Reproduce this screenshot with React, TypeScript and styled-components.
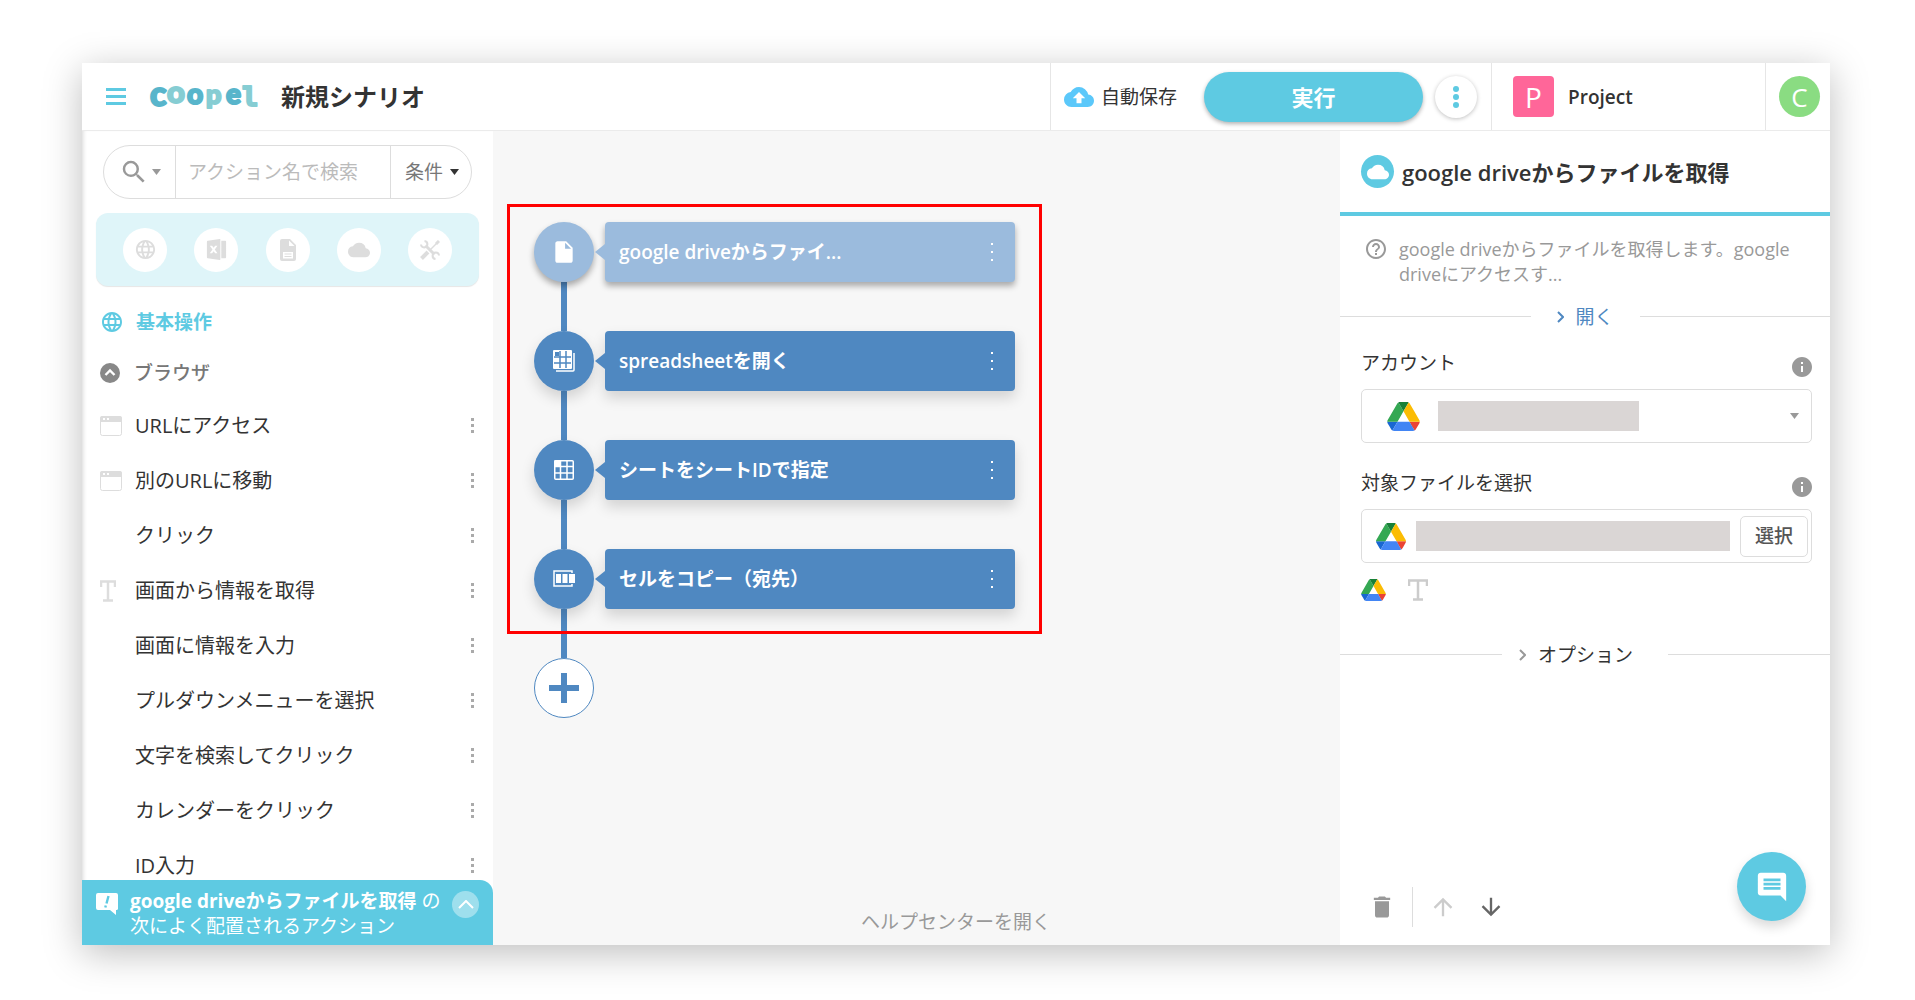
import React from "react";
import styled, { createGlobalStyle } from "styled-components";
import {
  MdArrowDownward,
  MdArrowUpward,
  MdCloud,
  MdCloudUpload,
  MdComment,
  MdDelete,
  MdHelpOutline,
  MdInfo,
  MdInsertDriveFile,
  MdLanguage,
  MdSearch,
} from "react-icons/md";
import { RiFileExcel2Fill } from "react-icons/ri";

const teal = "#5ecae2";
const blue = "#4f88c1";
const paleBlue = "#9bbbdd";
const ink = "#333333";
const grey = "#999999";
const line = "#dddddd";

const GlobalStyle = createGlobalStyle`
  * { box-sizing: border-box; }
  body {
    margin: 0;
    background: #ffffff;
    color: ${ink};
    font-family: "Open Sans", "Noto Sans CJK JP", sans-serif;
    font-size: 19px;
    line-height: 24px;
  }
  button, input, select { font: inherit; color: inherit; margin: 0; }
  button { border: 0; padding: 0; background: none; cursor: pointer; }
  h1, h2, p, ul, ol { margin: 0; padding: 0; }
  ul, ol { list-style: none; }
  svg { display: block; flex: none; }
`;

const Page = styled.div`
  display: flex;
  height: 100vh;
  padding: 63px 85px 55px 82px;
`;

const Window = styled.div`
  position: relative;
  flex: 1;
  min-width: 0;
  display: flex;
  flex-direction: column;
  background: #ffffff;
  box-shadow: 0 8px 36px rgba(0, 0, 0, 0.26);
`;

/* ---------- header ---------- */

const Header = styled.header`
  display: flex;
  align-items: center;
  height: 68px;
  flex: none;
  border-bottom: 1px solid #ebebeb;
`;

const MenuButton = styled.button`
  display: flex;
  flex-direction: column;
  gap: 4px;
  width: 20px;
  margin: 0 24px;
`;

const MenuBar = styled.span`
  height: 3px;
  background: ${teal};
`;

const Title = styled.h1`
  margin-left: 22px;
  font-size: 24px;
  line-height: 32px;
  font-weight: 700;
`;

const HeaderGroup = styled.div<{ $push?: boolean }>`
  display: flex;
  align-items: center;
  align-self: stretch;
  margin-left: ${(p) => (p.$push ? "auto" : "0")};
  border-left: 1px solid #e6e6e6;
`;

const AutoSave = styled.span`
  display: flex;
  align-items: center;
  gap: 7px;
  padding: 0 27px 0 13px;
  svg { color: #5bc8fa; }
`;

const RunButton = styled.button`
  width: 219px;
  height: 50px;
  border-radius: 25px;
  background: ${teal};
  color: #ffffff;
  font-size: 22px;
  font-weight: 700;
  box-shadow: 0 2px 4px rgba(0, 0, 0, 0.3);
`;

const MoreButton = styled.button`
  display: grid;
  place-items: center;
  width: 42px;
  height: 42px;
  margin: 0 14px 0 12px;
  border-radius: 50%;
  box-shadow: 0 1px 4px rgba(0, 0, 0, 0.25);
`;

const ProjectButton = styled.button`
  display: flex;
  align-items: center;
  gap: 14px;
  width: 273px;
  padding-left: 21px;
  font-weight: 600;
`;

const ProjectBadge = styled.span`
  display: grid;
  place-items: center;
  width: 41px;
  height: 41px;
  border-radius: 4px;
  background: #ff6699;
  color: #ffffff;
  font-size: 28px;
  font-weight: 400;
`;

const Avatar = styled.button`
  width: 41px;
  height: 41px;
  margin: 0 10px 0 13px;
  border-radius: 50%;
  background: #8adc82;
  color: #ffffff;
  font-size: 26px;
`;

/* ---------- body ---------- */

const Body = styled.div`
  flex: 1;
  min-height: 0;
  display: flex;
`;

const Sidebar = styled.aside`
  display: flex;
  flex-direction: column;
  width: 411px;
  flex: none;
  box-shadow: inset 4px 0 4px -3px rgba(0, 0, 0, 0.16);
`;

const SearchForm = styled.form`
  display: flex;
  flex: none;
  height: 54px;
  margin: 14px 21px;
  border: 1px solid ${line};
  border-radius: 27px;
  overflow: hidden;
`;

const ScopeButton = styled.button`
  display: flex;
  align-items: center;
  gap: 3px;
  width: 71px;
  padding-left: 15px;
  color: ${grey};
`;

const SearchInput = styled.input`
  flex: 1;
  min-width: 0;
  padding: 0 12px;
  border: 0;
  border-left: 1px solid ${line};
  border-right: 1px solid ${line};
  background: none;
  outline: none;
  &::placeholder { color: #bbbbbb; opacity: 1; }
`;

const ConditionBox = styled.div`
  position: relative;
  display: flex;
  width: 80px;
  svg {
    position: absolute;
    right: 12px;
    top: 23px;
    pointer-events: none;
  }
`;

const ConditionSelect = styled.select`
  flex: 1;
  appearance: none;
  border: 0;
  padding: 0 14px;
  background: none;
  color: #777777;
`;

const Categories = styled.nav`
  display: flex;
  justify-content: space-between;
  align-items: center;
  flex: none;
  height: 73px;
  margin: 0 14px 10px;
  padding: 0 27px;
  border-radius: 12px;
  background: #dff5f9;
  box-shadow: 0 1px 1px rgba(0, 0, 0, 0.1);
`;

const CategoryButton = styled.button`
  display: grid;
  place-items: center;
  width: 44px;
  height: 44px;
  border-radius: 50%;
  background: #ffffff;
  color: #dddddd;
`;

const ActionScroll = styled.div`
  flex: 1;
  min-height: 0;
  overflow: hidden;
`;

const GroupRow = styled.h2<{ $color: string }>`
  display: flex;
  align-items: center;
  height: 51px;
  padding-left: 18px;
  gap: 12px;
  font-size: 19px;
  font-weight: 700;
  color: ${(p) => p.$color};
`;

const GroupToggle = styled.button`
  display: flex;
  align-items: center;
  gap: 14px;
  font-weight: 500;
`;

const ActionRow = styled.li`
  display: flex;
  align-items: center;
  height: 55px;
  padding: 0 15px 0 18px;
  font-size: 20px;
`;

const ActionIcon = styled.span`
  width: 35px;
  color: #dddddd;
`;

const DotsButton = styled.button`
  margin-left: auto;
  padding: 4px;
  color: #aaaaaa;
`;

const Suggestion = styled.section`
  display: flex;
  align-items: flex-start;
  flex: none;
  height: 65px;
  padding: 9px 14px 0;
  gap: 12px;
  border-top-right-radius: 13px;
  background: ${teal};
  color: #ffffff;
  > svg { margin-top: 4px; }
`;

const SuggestionText = styled.p`
  flex: 1;
  white-space: nowrap;
  line-height: 25px;
`;

const CollapseButton = styled.button`
  display: grid;
  place-items: center;
  width: 27px;
  height: 27px;
  margin-top: 2px;
  border-radius: 50%;
  background: rgba(255, 255, 255, 0.4);
`;

/* ---------- flow canvas ---------- */

const Canvas = styled.main`
  flex: 1;
  min-width: 0;
  display: flex;
  flex-direction: column;
  padding: 91px 0 11px 41px;
  background: #f7f7f7;
`;

const Steps = styled.ol`
  position: relative;
  max-width: 481px;
`;

const Highlight = styled.li`
  position: absolute;
  inset: -18px -27px -25px;
  border: 3px solid #ff0000;
  pointer-events: none;
`;

const Step = styled.li`
  display: flex;
  align-items: center;
  gap: 11px;
`;

const Connector = styled.li`
  width: 6px;
  height: 49px;
  margin-left: 27px;
  background: ${blue};
`;

const Tail = styled.div`
  width: 6px;
  height: 49px;
  margin-left: 27px;
  background: ${blue};
`;

const stepShadow = (active?: boolean) =>
  active ? "0 4px 6px rgba(0, 0, 0, 0.32)" : "0 7px 14px rgba(0, 0, 0, 0.15)";

const StepCircle = styled.span<{ $active?: boolean }>`
  display: grid;
  place-items: center;
  flex: none;
  width: 60px;
  height: 60px;
  border-radius: 50%;
  background: ${(p) => (p.$active ? paleBlue : blue)};
  color: #ffffff;
  box-shadow: ${(p) => stepShadow(p.$active)};
`;

const StepCard = styled.div<{ $active?: boolean }>`
  position: relative;
  flex: 1;
  display: flex;
  align-items: center;
  justify-content: space-between;
  height: 60px;
  padding: 0 18px 0 14px;
  border-radius: 4px;
  background: ${(p) => (p.$active ? paleBlue : blue)};
  color: #ffffff;
  font-weight: 600;
  box-shadow: ${(p) => stepShadow(p.$active)};
  &::before {
    content: "";
    position: absolute;
    right: 100%;
    top: 22px;
    border: 8px solid transparent;
    border-left-width: 0;
    border-right: 10px solid ${(p) => (p.$active ? paleBlue : blue)};
  }
  button { color: #ffffff; margin: 0; }
`;

const AddButton = styled.button`
  display: grid;
  place-items: center;
  flex: none;
  width: 60px;
  height: 60px;
  border: 1px solid ${blue};
  border-radius: 50%;
  background: #ffffff;
  color: ${blue};
`;

const HelpLink = styled.a`
  align-self: center;
  margin-top: auto;
  margin-left: 38px;
  color: ${grey};
  text-decoration: none;
`;

/* ---------- detail panel ---------- */

const Panel = styled.aside`
  display: flex;
  flex-direction: column;
  width: 490px;
  flex: none;
`;

const PanelHeader = styled.div`
  display: flex;
  align-items: center;
  gap: 8px;
  height: 85px;
  padding-left: 21px;
  border-bottom: 4px solid ${teal};
`;

const CloudBadge = styled.span`
  display: grid;
  place-items: center;
  width: 33px;
  height: 33px;
  border-radius: 50%;
  background: ${teal};
  color: #ffffff;
`;

const PanelTitle = styled.h2`
  font-size: 22px;
  font-weight: 600;
  line-height: 28px;
`;

const Description = styled.div`
  display: flex;
  gap: 11px;
  padding: 21px 24px 17px;
  color: ${grey};
  font-size: 18px;
  line-height: 25px;
`;

const Fold = styled.div<{ $top?: number }>`
  display: flex;
  align-items: center;
  height: 25px;
  margin-top: ${(p) => p.$top ?? 0}px;
  &::before, &::after {
    content: "";
    flex: 1;
    height: 1px;
    background: ${line};
  }
`;

const FoldButton = styled.button<{ $color: string; $pad: string }>`
  display: flex;
  align-items: center;
  gap: 12px;
  padding: ${(p) => p.$pad};
  color: ${(p) => p.$color};
`;

const Field = styled.div<{ $top: number }>`
  margin: ${(p) => p.$top}px 18px 0 21px;
`;

const FieldHead = styled.div`
  display: flex;
  justify-content: space-between;
  align-items: flex-start;
  height: 28px;
  margin: 0 -2px 10px 0;
  svg { align-self: flex-end; color: ${grey}; }
`;

const FieldBox = styled.div<{ $pad: string; $gap: number }>`
  position: relative;
  display: flex;
  align-items: center;
  gap: ${(p) => p.$gap}px;
  height: 54px;
  padding: ${(p) => p.$pad};
  border: 1px solid ${line};
  border-radius: 5px;
`;

const Redacted = styled.span`
  width: 201px;
  height: 30px;
  margin-right: auto;
  background: #dad6d5;
`;

const AccountSelect = styled.select`
  position: absolute;
  inset: 0;
  width: 100%;
  appearance: none;
  border: 0;
  background: transparent;
`;

const FileInput = styled.input`
  flex: 1;
  min-width: 0;
  height: 30px;
  padding: 0;
  border: 0;
  background: #dad6d5;
`;

const PickButton = styled.button`
  width: 68px;
  height: 41px;
  border: 1px solid ${line};
  border-radius: 5px;
  color: #555555;
  font-weight: 500;
`;

const SourceTypes = styled.div`
  display: flex;
  align-items: center;
  gap: 22px;
  height: 23px;
  margin: 15px 21px 0;
  color: #cccccc;
`;

const PanelFooter = styled.div`
  display: flex;
  align-items: center;
  gap: 20px;
  height: 40px;
  margin: auto 0 18px;
  padding-left: 28px;
`;

const FooterRule = styled.span`
  width: 1px;
  height: 40px;
  margin: 0 -4px;
  background: ${line};
`;

const IconButton = styled.button<{ $color: string }>`
  color: ${(p) => p.$color};
`;

const ChatButton = styled.button`
  position: absolute;
  right: 24px;
  bottom: 24px;
  display: grid;
  place-items: center;
  width: 69px;
  height: 69px;
  border-radius: 50%;
  background: ${teal};
  color: #ffffff;
  box-shadow: 0 6px 12px rgba(0, 0, 0, 0.15);
`;

/* ---------- drawings ---------- */

const logoFont = '"Lato", "Open Sans", sans-serif';
const deep = "#58b5cb";
const soft = "#86cdd3";

const LogoSvg = styled.svg`
  overflow: visible;
  stroke-linejoin: round;
  stroke-width: 2px;
  font-family: ${logoFont};
  font-weight: 900;
`;

const Logo = () => (
  <LogoSvg width="109" height="56" viewBox="0 0 109 56" role="img" aria-label="Coopel">
    <text x="0" y="37" fontSize="34" fill={deep} stroke={deep}>c</text>
    <text x="17" y="34" fontSize="31" fill={soft} stroke={soft}>o</text>
    <text x="37" y="35" fontSize="28" fill={deep} stroke={deep}>o</text>
    <text x="56" y="35" fontSize="27" fill={soft} stroke={soft}>p</text>
    <text x="76" y="35" fontSize="28" fill={deep} stroke={deep}>e</text>
    <text x="92" y="37" fontSize="27" fill={soft} stroke={soft} fontFamily="DejaVu Sans Mono" fontWeight="700" style={undefined}>
      <tspan fontFamily='"DejaVu Sans Mono", monospace'>l</tspan>
    </text>
  </LogoSvg>
);

const Caret = ({ color = grey }: { color?: string }) => (
  <svg width="9" height="6" viewBox="0 0 9 6" aria-hidden="true">
    <path d="M0 0h9L4.500 6z" fill={color} />
  </svg>
);

const Dots = ({ size = 3, step = 6 }: { size?: number; step?: number }) => (
  <svg width={size} height={size + step * 2} aria-hidden="true" fill="currentColor">
    <rect width={size} height={size} />
    <rect y={step} width={size} height={size} />
    <rect y={step * 2} width={size} height={size} />
  </svg>
);

const RoundDots = () => (
  <svg width="6" height="22" aria-hidden="true" fill={teal}>
    <circle cx="3" cy="3" r="3" />
    <circle cx="3" cy="11" r="3" />
    <circle cx="3" cy="19" r="3" />
  </svg>
);

const Chevron = ({ color }: { color: string }) => (
  <svg width="7" height="12" viewBox="0 0 7 12" fill="none" stroke={color} strokeWidth="2" aria-hidden="true">
    <path d="M1 1l5 5-5 5" />
  </svg>
);

const DocumentIcon = () => (
  <svg width="16" height="22" viewBox="0 0 16 22" aria-hidden="true">
    <path fill="currentColor" fillRule="evenodd" d="M2 0h8l6 6v14a2 2 0 0 1-2 2H2a2 2 0 0 1-2-2V2a2 2 0 0 1 2-2zM9 1.500V7h5.500zM3 13v6.500h10V13zM4.500 14.500h7v1h-7zM4.500 17h7v1h-7z" />
  </svg>
);

const ToolsIcon = () => (
  <svg width="20" height="20" viewBox="0 0 20 20" fill="none" stroke="currentColor" aria-hidden="true">
    <path d="M8 12l-6.500 6.500" strokeWidth="4" />
    <path d="M10 10l7-7" strokeWidth="1.500" />
    <path d="M16 4l3-3" strokeWidth="3" />
    <path d="M5.500 5.500l9 9" strokeWidth="3" />
    <path d="M4.500 1A3.200 3.200 0 1 1 1 4.500M19 15.500A3.200 3.200 0 1 0 15.500 19" strokeWidth="2" />
  </svg>
);

const CircleUp = () => (
  <svg width="20" height="20" viewBox="0 0 20 20" aria-hidden="true">
    <circle cx="10" cy="10" r="10" fill="#888888" />
    <path d="M5.500 12l4.500-4.500 4.500 4.500" fill="none" stroke="#ffffff" strokeWidth="2.400" />
  </svg>
);

const BrowserIcon = () => (
  <svg width="22" height="20" viewBox="0 0 22 20" aria-hidden="true">
    <rect x=".5" y=".5" width="21" height="19" rx="2" fill="#ffffff" stroke="#dddddd" />
    <path d="M2 0h18a2 2 0 0 1 2 2v4H0V2a2 2 0 0 1 2-2z" fill="#dddddd" />
    <path d="M3 2h2v2H3zM7 2h2v2H7z" fill="#ffffff" />
  </svg>
);

const SerifT = ({ width = 20 }: { width?: number }) => (
  <svg width={width} height="22" viewBox={`0 0 ${width} 22`} aria-hidden="true" fill="none" stroke="currentColor" strokeWidth="3">
    <path d={`M1 7V1.500h${width - 2}V7M${width / 2} 1v20M${width / 2 - 5} 20.500h10`} strokeWidth="2.500" />
  </svg>
);

const SuggestIcon = () => (
  <svg width="22" height="22" viewBox="0 0 22 22" aria-hidden="true">
    <path d="M2 0h18a2 2 0 0 1 2 2v13a2 2 0 0 1-1 2h-1v5l-6-5H2a2 2 0 0 1-2-2V2a2 2 0 0 1 2-2z" fill="#ffffff" />
    <path d="M12.500 3l-2 7.500M9.800 12.500l-.5 2" stroke={teal} strokeWidth="2.400" />
  </svg>
);

const UpThin = () => (
  <svg width="16" height="9" viewBox="0 0 16 9" fill="none" stroke="#ffffff" strokeWidth="2" aria-hidden="true">
    <path d="M1 8l7-7 7 7" />
  </svg>
);

const SheetsIcon = () => (
  <svg width="22" height="22" viewBox="0 0 22 22" aria-hidden="true">
    <path d="M3 21h17a1 1 0 0 0 1-1V3" fill="none" stroke="#ffffff" strokeWidth="1.500" />
    <rect width="19" height="19" rx="1" fill="#ffffff" />
    <path d="M2 2h4v4H2z" fill={blue} />
    <path d="M7 1v17M13 1v17M1 7h17M1 13h17" stroke={blue} strokeWidth="1.500" />
  </svg>
);

const SheetIcon = () => (
  <svg width="20" height="20" viewBox="0 0 20 20" aria-hidden="true">
    <rect x=".75" y=".75" width="18.500" height="18.500" rx="1" fill="none" stroke="#ffffff" strokeWidth="1.500" />
    <path d="M1 1h5v5H1zM6.500 1v18M13 1v18M1 6.500h18M1 13h18" fill="#ffffff" stroke="#ffffff" strokeWidth="1.500" />
  </svg>
);

const CellsIcon = () => (
  <svg width="22" height="18" viewBox="0 0 22 18" aria-hidden="true">
    <path d="M19 3V1H1v15h18v-2" fill="none" stroke="#ffffff" strokeWidth="1.500" />
    <path d="M3 4h5v9H3zM9.500 4h5v9h-5zM16 4h6v9h-6z" fill="#ffffff" />
  </svg>
);

const PlusIcon = () => (
  <svg width="30" height="30" viewBox="0 0 30 30" aria-hidden="true">
    <path d="M12 0h6v12h12v6H18v12h-6V18H0v-6h12z" fill="currentColor" />
  </svg>
);

const DriveIcon = ({ width }: { width: number }) => (
  <svg width={width} height={Math.round((width * 78) / 87.3)} viewBox="0 0 87.3 78" aria-hidden="true">
    <path d="M6.600 66.850l3.850 6.650c.8 1.400 1.950 2.500 3.300 3.300L27.500 53H0c0 1.550.4 3.100 1.200 4.500z" fill="#1967d2" />
    <path d="M43.650 25L29.900 1.200c-1.350.8-2.500 1.900-3.300 3.300l-25.400 44A9.060 9.060 0 0 0 0 53h27.500z" fill="#34a853" />
    <path d="M73.550 76.800c1.350-.8 2.500-1.900 3.300-3.300l1.600-2.750L86.100 57.500c.8-1.400 1.200-2.950 1.200-4.500H59.800l5.850 11.500z" fill="#ea4335" />
    <path d="M43.650 25L57.400 1.200C56.050.4 54.500 0 52.900 0H34.400c-1.600 0-3.150.45-4.500 1.200z" fill="#188038" />
    <path d="M59.800 53H27.500L13.750 76.800c1.350.8 2.900 1.200 4.500 1.200h50.800c1.600 0 3.150-.45 4.500-1.200z" fill="#4285f4" />
    <path d="M73.400 26.500l-12.700-22c-.8-1.400-1.950-2.500-3.300-3.300L43.650 25 59.800 53h27.450c0-1.550-.4-3.100-1.200-4.500z" fill="#fbbc04" />
  </svg>
);

/* ---------- data ---------- */

const categories = [
  { label: "基本操作", icon: <MdLanguage size={23} /> },
  { label: "Excel", icon: <RiFileExcel2Fill size={23} /> },
  { label: "ファイル", icon: <DocumentIcon /> },
  { label: "クラウド", icon: <MdCloud size={22} /> },
  { label: "ツール", icon: <ToolsIcon /> },
];

const actions = [
  { name: "URLにアクセス", icon: <BrowserIcon /> },
  { name: "別のURLに移動", icon: <BrowserIcon /> },
  { name: "クリック" },
  { name: "画面から情報を取得", icon: <SerifT width={16} /> },
  { name: "画面に情報を入力" },
  { name: "プルダウンメニューを選択" },
  { name: "文字を検索してクリック" },
  { name: "カレンダーをクリック" },
  { name: "ID入力" },
];

const steps = [
  { name: "google driveからファイ...", icon: <MdInsertDriveFile size={26} />, active: true },
  { name: "spreadsheetを開く", icon: <SheetsIcon /> },
  { name: "シートをシートIDで指定", icon: <SheetIcon /> },
  { name: "セルをコピー（宛先）", icon: <CellsIcon /> },
];

export default function App() {
  return (
    <>
      <GlobalStyle />
      <Page>
        <Window>
          <Header>
            <MenuButton aria-label="メニュー">
              <MenuBar />
              <MenuBar />
              <MenuBar />
            </MenuButton>
            <Logo />
            <Title>新規シナリオ</Title>
            <HeaderGroup $push>
              <AutoSave>
                <MdCloudUpload size={30} />
                自動保存
              </AutoSave>
              <RunButton>実行</RunButton>
              <MoreButton aria-label="その他">
                <RoundDots />
              </MoreButton>
            </HeaderGroup>
            <HeaderGroup>
              <ProjectButton>
                <ProjectBadge>P</ProjectBadge>
                Project
              </ProjectButton>
            </HeaderGroup>
            <HeaderGroup>
              <Avatar>C</Avatar>
            </HeaderGroup>
          </Header>

          <Body>
            <Sidebar>
              <SearchForm role="search">
                <ScopeButton type="button" aria-label="検索対象">
                  <MdSearch size={30} />
                  <Caret />
                </ScopeButton>
                <SearchInput aria-label="アクション名で検索" placeholder="アクション名で検索" />
                <ConditionBox>
                  <ConditionSelect aria-label="条件">
                    <option>条件</option>
                  </ConditionSelect>
                  <Caret color={ink} />
                </ConditionBox>
              </SearchForm>
              <Categories>
                {categories.map((c) => (
                  <CategoryButton key={c.label} aria-label={c.label}>
                    {c.icon}
                  </CategoryButton>
                ))}
              </Categories>
              <ActionScroll>
                <GroupRow $color={teal}>
                  <MdLanguage size={24} />
                  基本操作
                </GroupRow>
                <GroupRow $color="#777777">
                  <GroupToggle>
                    <CircleUp />
                    ブラウザ
                  </GroupToggle>
                </GroupRow>
                <ul>
                  {actions.map((a) => (
                    <ActionRow key={a.name}>
                      <ActionIcon>{a.icon}</ActionIcon>
                      {a.name}
                      <DotsButton aria-label={a.name + "のメニュー"}>
                        <Dots />
                      </DotsButton>
                    </ActionRow>
                  ))}
                </ul>
              </ActionScroll>
              <Suggestion>
                <SuggestIcon />
                <SuggestionText>
                  <b>google driveからファイルを取得</b> の
                  <br />
                  次によく配置されるアクション
                </SuggestionText>
                <CollapseButton aria-label="開閉">
                  <UpThin />
                </CollapseButton>
              </Suggestion>
            </Sidebar>

            <Canvas>
              <Steps>
                {steps.map((s, i) => (
                  <React.Fragment key={s.name}>
                    {i > 0 && <Connector aria-hidden="true" />}
                    <Step>
                      <StepCircle $active={s.active}>{s.icon}</StepCircle>
                      <StepCard $active={s.active}>
                        {s.name}
                        <DotsButton aria-label={s.name + "のメニュー"}>
                          <Dots size={2} step={8} />
                        </DotsButton>
                      </StepCard>
                    </Step>
                  </React.Fragment>
                ))}
                <Highlight aria-hidden="true" />
              </Steps>
              <Tail />
              <AddButton aria-label="追加">
                <PlusIcon />
              </AddButton>
              <HelpLink href="#help">ヘルプセンターを開く</HelpLink>
            </Canvas>

            <Panel>
              <PanelHeader>
                <CloudBadge>
                  <MdCloud size={22} />
                </CloudBadge>
                <PanelTitle>google driveからファイルを取得</PanelTitle>
              </PanelHeader>
              <Description>
                <MdHelpOutline size={24} />
                <p>google driveからファイルを取得します。google driveにアクセスす...</p>
              </Description>
              <Fold>
                <FoldButton $color={blue} $pad="0 26px">
                  <Chevron color={blue} />
                  開く
                </FoldButton>
              </Fold>
              <Field $top={22}>
                <FieldHead>
                  <label htmlFor="account">アカウント</label>
                  <MdInfo size={24} />
                </FieldHead>
                <FieldBox $pad="0 12px 0 25px" $gap={18}>
                  <DriveIcon width={33} />
                  <Redacted />
                  <Caret />
                  <AccountSelect id="account" />
                </FieldBox>
              </Field>
              <Field $top={28}>
                <FieldHead>
                  <label htmlFor="file">対象ファイルを選択</label>
                  <MdInfo size={24} />
                </FieldHead>
                <FieldBox $pad="0 3px 0 14px" $gap={10}>
                  <DriveIcon width={30} />
                  <FileInput id="file" readOnly />
                  <PickButton>選択</PickButton>
                </FieldBox>
              </Field>
              <SourceTypes>
                <DriveIcon width={25} />
                <SerifT />
              </SourceTypes>
              <Fold $top={41}>
                <FoldButton $color={ink} $pad="0 35px 0 17px">
                  <Chevron color={grey} />
                  オプション
                </FoldButton>
              </Fold>
              <PanelFooter>
                <IconButton $color={grey} aria-label="削除">
                  <MdDelete size={28} />
                </IconButton>
                <FooterRule />
                <IconButton $color="#cccccc" aria-label="上へ">
                  <MdArrowUpward size={28} />
                </IconButton>
                <IconButton $color="#666666" aria-label="下へ">
                  <MdArrowDownward size={28} />
                </IconButton>
              </PanelFooter>
            </Panel>
          </Body>
          <ChatButton aria-label="チャット">
            <MdComment size={34} />
          </ChatButton>
        </Window>
      </Page>
    </>
  );
}
